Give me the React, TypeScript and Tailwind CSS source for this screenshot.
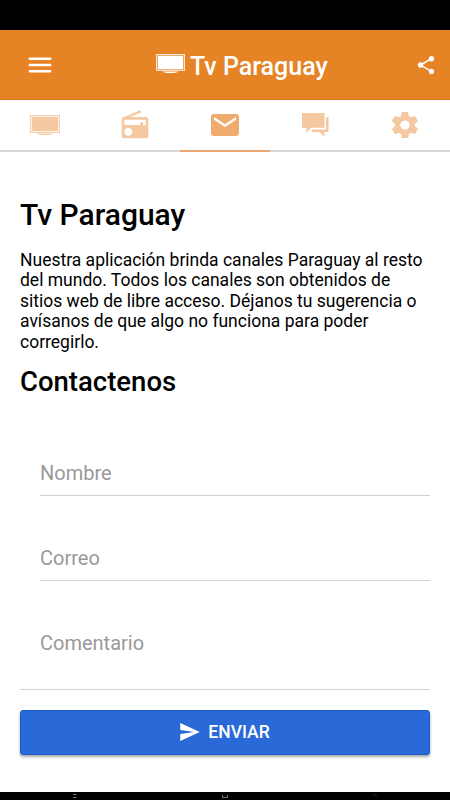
import { useState } from 'react';
import type { ReactNode } from 'react';
import { IoMdMenu, IoMdSend, IoMdSettings, IoMdShare } from 'react-icons/io';

function TvIcon({ className }: { className?: string }) {
  return (
    <svg viewBox="0 0 30 20" className={className} fill="currentColor" preserveAspectRatio="none">
      <path d="M0 0h30v18H0z" fillOpacity={0.25} />
      <path fillRule="evenodd" d="M0 0h30v18H0zM1 1v16h28V1z" fillOpacity={0.8} />
      <path d="M2 2h26v14H2z" />
      <path d="M7 18.4h16v.6l-4 1h-8l-4-1z" />
    </svg>
  );
}

function RadioIcon() {
  return (
    <svg viewBox="0 0 24 24" className="size-8" fill="currentColor">
      <path d="M3.24 6.15C2.51 6.43 2 7.17 2 8v12c0 1.1.89 2 2 2h16c1.11 0 2-.9 2-2V8c0-1.11-.89-2-2-2H8.3l8.26-3.34L15.88 1 3.24 6.15zM7 20c-1.66 0-3-1.34-3-3s1.34-3 3-3 3 1.34 3 3-1.34 3-3 3zm13-8h-2v-2h-2v2H4V8h16v4z" />
    </svg>
  );
}

function MailIcon() {
  return (
    <svg viewBox="0 0 512 512" className="size-8" fill="currentColor">
      <path d="M437.332 80H74.668C51.199 80 32 99.198 32 122.667v266.666C32 412.802 51.199 432 74.668 432h362.664C460.801 432 480 412.802 480 389.333V122.667C480 99.198 460.801 80 437.332 80zM432 170.667L256 288 80 170.667V128l176 117.333L432 128v42.667z" />
    </svg>
  );
}

function ChatIcon() {
  return (
    <svg viewBox="0 0 27 25" className="w-[27px] h-[25px]" fill="currentColor">
      <path d="M0 0h22.5v14.7H9.3l-5 5v-5H0z" />
      <path d="M24 4.3h2.5V19h-4v5l-5-5H8.8l2-2.5H24z" />
    </svg>
  );
}

const TABS: { id: string; label: string; icon: ReactNode }[] = [
  { id: 'tv', label: 'Tv', icon: <TvIcon className="w-[30px] h-5" /> },
  { id: 'radio', label: 'Radio', icon: <RadioIcon /> },
  { id: 'contact', label: 'Contacto', icon: <MailIcon /> },
  { id: 'chat', label: 'Chat', icon: <ChatIcon /> },
  { id: 'settings', label: 'Ajustes', icon: <IoMdSettings size={32} /> },
];

function Field({ placeholder }: { placeholder: string }) {
  return (
    <input
      type="text"
      placeholder={placeholder}
      className="block ml-5 w-[390px] h-[45px] mb-10 border-b border-[#d2d2d2] text-[20px] placeholder:text-[#999999] outline-none"
    />
  );
}

export default function App() {
  const [active, setActive] = useState('contact');

  return (
    <div className="flex flex-col w-[450px] h-[800px] overflow-hidden bg-white text-black font-[Roboto,sans-serif]">
      {/* Status bar */}
      <div className="h-[30px] shrink-0 bg-black" />

      {/* Header */}
      <header className="flex items-center h-[70px] shrink-0 pl-[25px] pr-[13px] bg-[#e58325] border-b border-[#d87a17] text-white">
        <button aria-label="Menu">
          <IoMdMenu size={30} />
        </button>
        <div className="flex items-center gap-[5px] ml-[101px] mr-auto">
          <TvIcon className="w-[29px] h-[19px] -mt-[3px]" />
          <h1 className="text-[25px] leading-[30px] font-medium mt-1">Tv Paraguay</h1>
        </div>
        <button aria-label="Compartir">
          <IoMdShare size={22} />
        </button>
      </header>

      {/* Tabs */}
      <nav className="grid grid-cols-5 h-[52px] shrink-0 border-b-2 border-[#d8d8d8]">
        {TABS.map((tab) => (
          <button
            key={tab.id}
            aria-label={tab.label}
            onClick={() => setActive(tab.id)}
            className={`flex items-center justify-center h-[52px] border-b-2 ${
              tab.id === active
                ? 'text-[#efac6e] border-[#e8a775]'
                : 'text-[#f4c8a0] border-transparent'
            }`}
          >
            {tab.icon}
          </button>
        ))}
      </nav>

      {/* Content */}
      <main className="flex-1 px-5 pt-[45px]">
        <h2 className="text-[30px] leading-9 font-medium">Tv Paraguay</h2>
        <p className="mt-[16.5px] text-[17.5px] leading-[20.5px]">
          Nuestra aplicación brinda canales Paraguay al resto
          <br />
          del mundo. Todos los canales son obtenidos de
          <br />
          sitios web de libre acceso. Déjanos tu sugerencia o
          <br />
          avísanos de que algo no funciona para poder
          <br />
          corregirlo.
        </p>
        <h3 className="mt-[13.5px] text-[27.5px] leading-8 font-medium">Contactenos</h3>

        <form className="mt-[53px]" onSubmit={(e) => e.preventDefault()}>
          <Field placeholder="Nombre" />
          <Field placeholder="Correo" />
          <div className="h-[69px] pl-5 border-b border-[#d2d2d2]">
            <textarea
              placeholder="Comentario"
              className="block w-full h-[60px] pt-[7px] resize-none text-[20px] leading-[30px] placeholder:text-[#999999] outline-none"
            />
          </div>
          <button
            type="submit"
            className="flex items-center justify-center gap-[6px] w-full h-[45px] mt-5 pr-[2px] rounded-[3px] bg-[#2a6ad8] border border-[#1c5cc4] text-white text-[17.5px] font-medium shadow-[0_2px_3px_rgba(0,0,0,0.35)]"
          >
            <IoMdSend size={24} />
            ENVIAR
          </button>
        </form>
      </main>

      {/* Navigation bar */}
      <div className="grid grid-cols-3 h-2 shrink-0 bg-black text-[#777777]">
        <svg viewBox="0 0 150 8" className="w-[150px] h-2" stroke="currentColor">
          <path d="M73 2.5h3.5M73 5.5h3.5" />
        </svg>
        <svg viewBox="0 0 150 8" className="w-[150px] h-2" stroke="currentColor" fill="none">
          <path d="M72.5 3v2.5h5V3" />
        </svg>
        <svg viewBox="0 0 150 8" className="w-[150px] h-2" stroke="#222222" fill="none">
          <path d="M73 3h3l1 1.5" />
        </svg>
      </div>
    </div>
  );
}
